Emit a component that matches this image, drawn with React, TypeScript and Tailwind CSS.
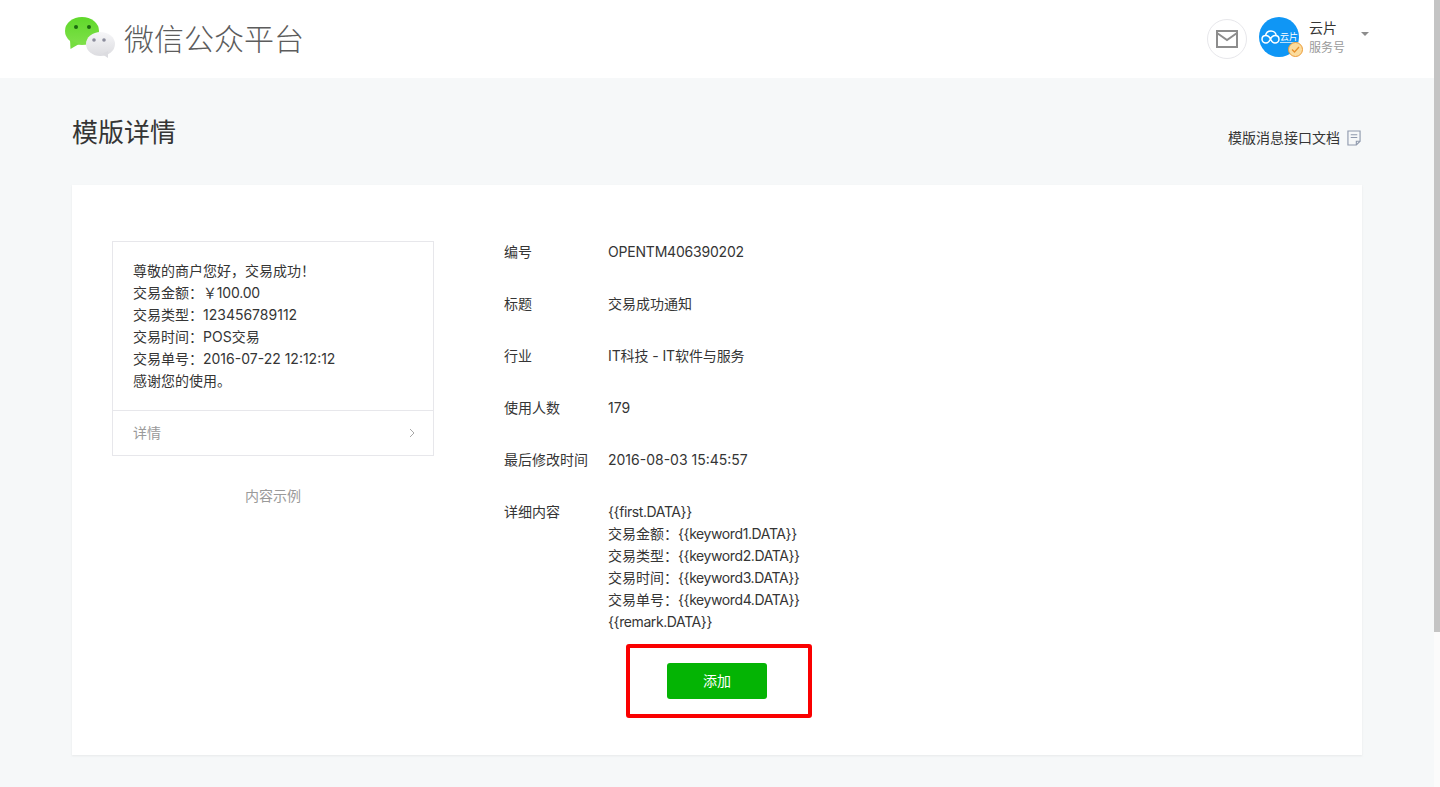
const font = "font-['Inter','Noto_Sans_CJK_SC',sans-serif]";

const sampleLines = [
  "尊敬的商户您好，交易成功！",
  "交易金额：",
  "交易类型：123456789112",
  "交易时间：POS交易",
  "交易单号：2016-07-22 12:12:12",
  "感谢您的使用。",
];

const detailLines = [
  ["", "{{first.DATA}}"],
  ["交易金额：", "{{keyword1.DATA}}"],
  ["交易类型：", "{{keyword2.DATA}}"],
  ["交易时间：", "{{keyword3.DATA}}"],
  ["交易单号：", "{{keyword4.DATA}}"],
  ["", "{{remark.DATA}}"],
];

const rows = [
  ["编号", "OPENTM406390202", "tracking-[-0.2px]"],
  ["标题", "交易成功通知", ""],
  ["行业", "IT科技 - IT软件与服务", "tracking-[-0.1px]"],
  ["使用人数", "179", ""],
  ["最后修改时间", "2016-08-03 15:45:57", ""],
];

function WechatLogo() {
  return (
    <svg width="50" height="41" viewBox="0 0 50 41" className="shrink-0 mb-[3px]">
      <defs>
        <linearGradient id="wxGreen" x1="0" y1="0" x2="0" y2="1">
          <stop offset="0" stopColor="#5fd82a" />
          <stop offset="1" stopColor="#7fe04a" />
        </linearGradient>
        <linearGradient id="wxGray" x1="0" y1="0" x2="0" y2="1">
          <stop offset="0" stopColor="#f6f6f8" />
          <stop offset="1" stopColor="#dcdce0" />
        </linearGradient>
      </defs>
      <ellipse cx="17" cy="14" rx="17" ry="14" fill="url(#wxGreen)" />
      <path d="M5 23 L5.5 32 L14 27 Z" fill="#76de40" />
      <circle cx="11" cy="10" r="2" fill="#1c6b10" />
      <circle cx="24" cy="10" r="2" fill="#1c6b10" />
      <ellipse cx="35.5" cy="27" rx="14.5" ry="12" fill="url(#wxGray)" />
      <path d="M37 37 L43 41 L43 34 Z" fill="#dcdce0" />
      <circle cx="29" cy="23" r="1.8" fill="#8b8c9c" />
      <circle cx="39" cy="23" r="1.8" fill="#8b8c9c" />
    </svg>
  );
}

function Avatar() {
  return (
    <div className="relative w-10 h-10 mb-1 rounded-full bg-[#0f96f5] flex items-center pl-[2px]">
      <svg width="19" height="14" viewBox="0 0 19 14" fill="none" stroke="#fff" strokeWidth="1.5" className="shrink-0">
        <path d="M9.5 9 C8.5 6.8 7 5.5 5 5.5 C2.8 5.5 1 7 1 9.2 C1 11.4 2.8 13 5 13 C7.2 13 8.5 11.2 9.5 9 C10.5 6.8 12 5.5 14 5.5 C16.2 5.5 18 7 18 9.2 C18 11.4 16.2 13 14 13 C11.8 13 10.5 11.2 9.5 9 Z" />
        <path d="M4.6 5.6 C5 2.8 7.4 1 10 1 C12.8 1 15 3 15.2 5.8" />
      </svg>
      <span className="text-[9px] leading-[11px] text-white border-b border-white/70 whitespace-nowrap">云片</span>
      <div className="absolute right-[-4px] bottom-0 w-[15px] h-[15px] rounded-full bg-[#fbdc9e] border border-[#ec9c38] flex items-center justify-center">
        <svg width="9" height="9" viewBox="0 0 9 9" fill="none" stroke="#e8902a" strokeWidth="1.3">
          <path d="M1 4.5 L3.5 7 L8 2" />
        </svg>
      </div>
    </div>
  );
}

export default function App() {
  return (
    <div className={`${font} h-[787px] overflow-hidden bg-[#f6f8f9] flex`}>
      <div className="flex-1 min-w-0 flex flex-col relative">
        <header className="h-[78px] bg-white flex items-center justify-between pl-[65px] pr-[65px] shrink-0">
          <div className="flex items-center gap-[9px]">
            <WechatLogo />
            <span className="text-[30px] text-[#5c5c5c] font-light">微信公众平台</span>
          </div>
          <div className="flex items-center">
            <div className="w-10 h-10 rounded-full border border-[#e7e7eb] flex items-center justify-center mr-3">
              <svg width="22" height="18" viewBox="0 0 22 18" fill="none" stroke="#8d8d8d" strokeWidth="2">
                <rect x="1" y="1" width="20" height="16" />
                <path d="M1 3 L11 10 L21 3" />
              </svg>
            </div>
            <Avatar />
            <div className="ml-[10px] flex flex-col w-[48px] mb-[2px]">
              <span className="text-sm leading-5 text-[#353535]">云片</span>
              <span className="text-xs leading-5 text-[#9a9a9a]">服务号</span>
            </div>
            <div className="ml-[4px] mb-[10px] w-0 h-0 border-x-4 border-x-transparent border-t-[4px] border-t-[#8d8d8d]" />
          </div>
        </header>

        <main className="px-[72px]">
          <div className="flex justify-between h-[107px]">
            <h1 className="text-[26px] leading-[36px] text-[#353535] font-normal mt-[37px]">模版详情</h1>
            <a className="flex items-center gap-[7px] pr-px text-sm text-[#353535] h-[20px] mt-[50px]">
              模版消息接口文档
              <svg width="14" height="16" viewBox="0 0 15 17" fill="none" stroke="#8f99ad" strokeWidth="1.2">
                <path d="M1 1 H14 V12 L10 16 H1 Z" />
                <path d="M10 16 V12 H14" />
                <path d="M4 5 H11 M4 8 H11" />
              </svg>
            </a>
          </div>

          <section className="bg-white h-[570px] shadow-[0_1px_2px_rgba(150,150,150,0.15)] pt-[56px] pl-[40px] flex text-sm text-[#353535]">
            <div className="w-[322px] shrink-0 mr-[70px]">
              <div className="border border-[#e7e7eb]">
                <div className="px-5 pt-[18px] pb-[18px] leading-[22px] h-[168px]">
                  {sampleLines.map((line) => (
                    <div key={line}>
                      {line}
                      {line === "交易金额：" && <span className="tracking-[-0.2px]">￥100.00</span>}
                    </div>
                  ))}
                </div>
                <div className="border-t border-[#e7e7eb] h-[45px] pl-5 pr-[18px] flex items-center justify-between text-[#9a9a9a]">
                  <span>详情</span>
                  <svg width="6" height="10" viewBox="0 0 6 10" fill="none" stroke="#a8a8a8" strokeWidth="1">
                    <path d="M1 1 L5 5 L1 9" />
                  </svg>
                </div>
              </div>
              <div className="text-center text-[#9a9a9a] mt-[30px] leading-5">内容示例</div>
            </div>

            <div className="flex-1">
              {rows.map(([label, value, spacing]) => (
                <div key={label} className="flex leading-[22px] mb-[30px]">
                  <div className="w-[104px] shrink-0">{label}</div>
                  <div className={spacing}>{value}</div>
                </div>
              ))}
              <div className="flex leading-[22px]">
                <div className="w-[104px] shrink-0">详细内容</div>
                <div>
                  {detailLines.map(([label, value]) => (
                    <div key={value}>
                      {label}
                      <span className="tracking-[-0.4px]">{value}</span>
                    </div>
                  ))}
                </div>
              </div>
              <button className="block ml-[163px] mt-[30px] w-[100px] h-9 rounded-[3px] bg-[#04b404] text-white text-sm">
                添加
              </button>
            </div>
          </section>
        </main>

        {/* annotation box drawn over the screenshot */}
        <div className="absolute left-[626px] top-[644px] w-[186px] h-[74px] border-4 border-[#fa0000] rounded-[3px] pointer-events-none" />
      </div>

      <div className="w-[6px] shrink-0 bg-[#fbfbfb]">
        <div className="h-[632px] bg-[#c4c4c4]" />
      </div>
    </div>
  );
}
